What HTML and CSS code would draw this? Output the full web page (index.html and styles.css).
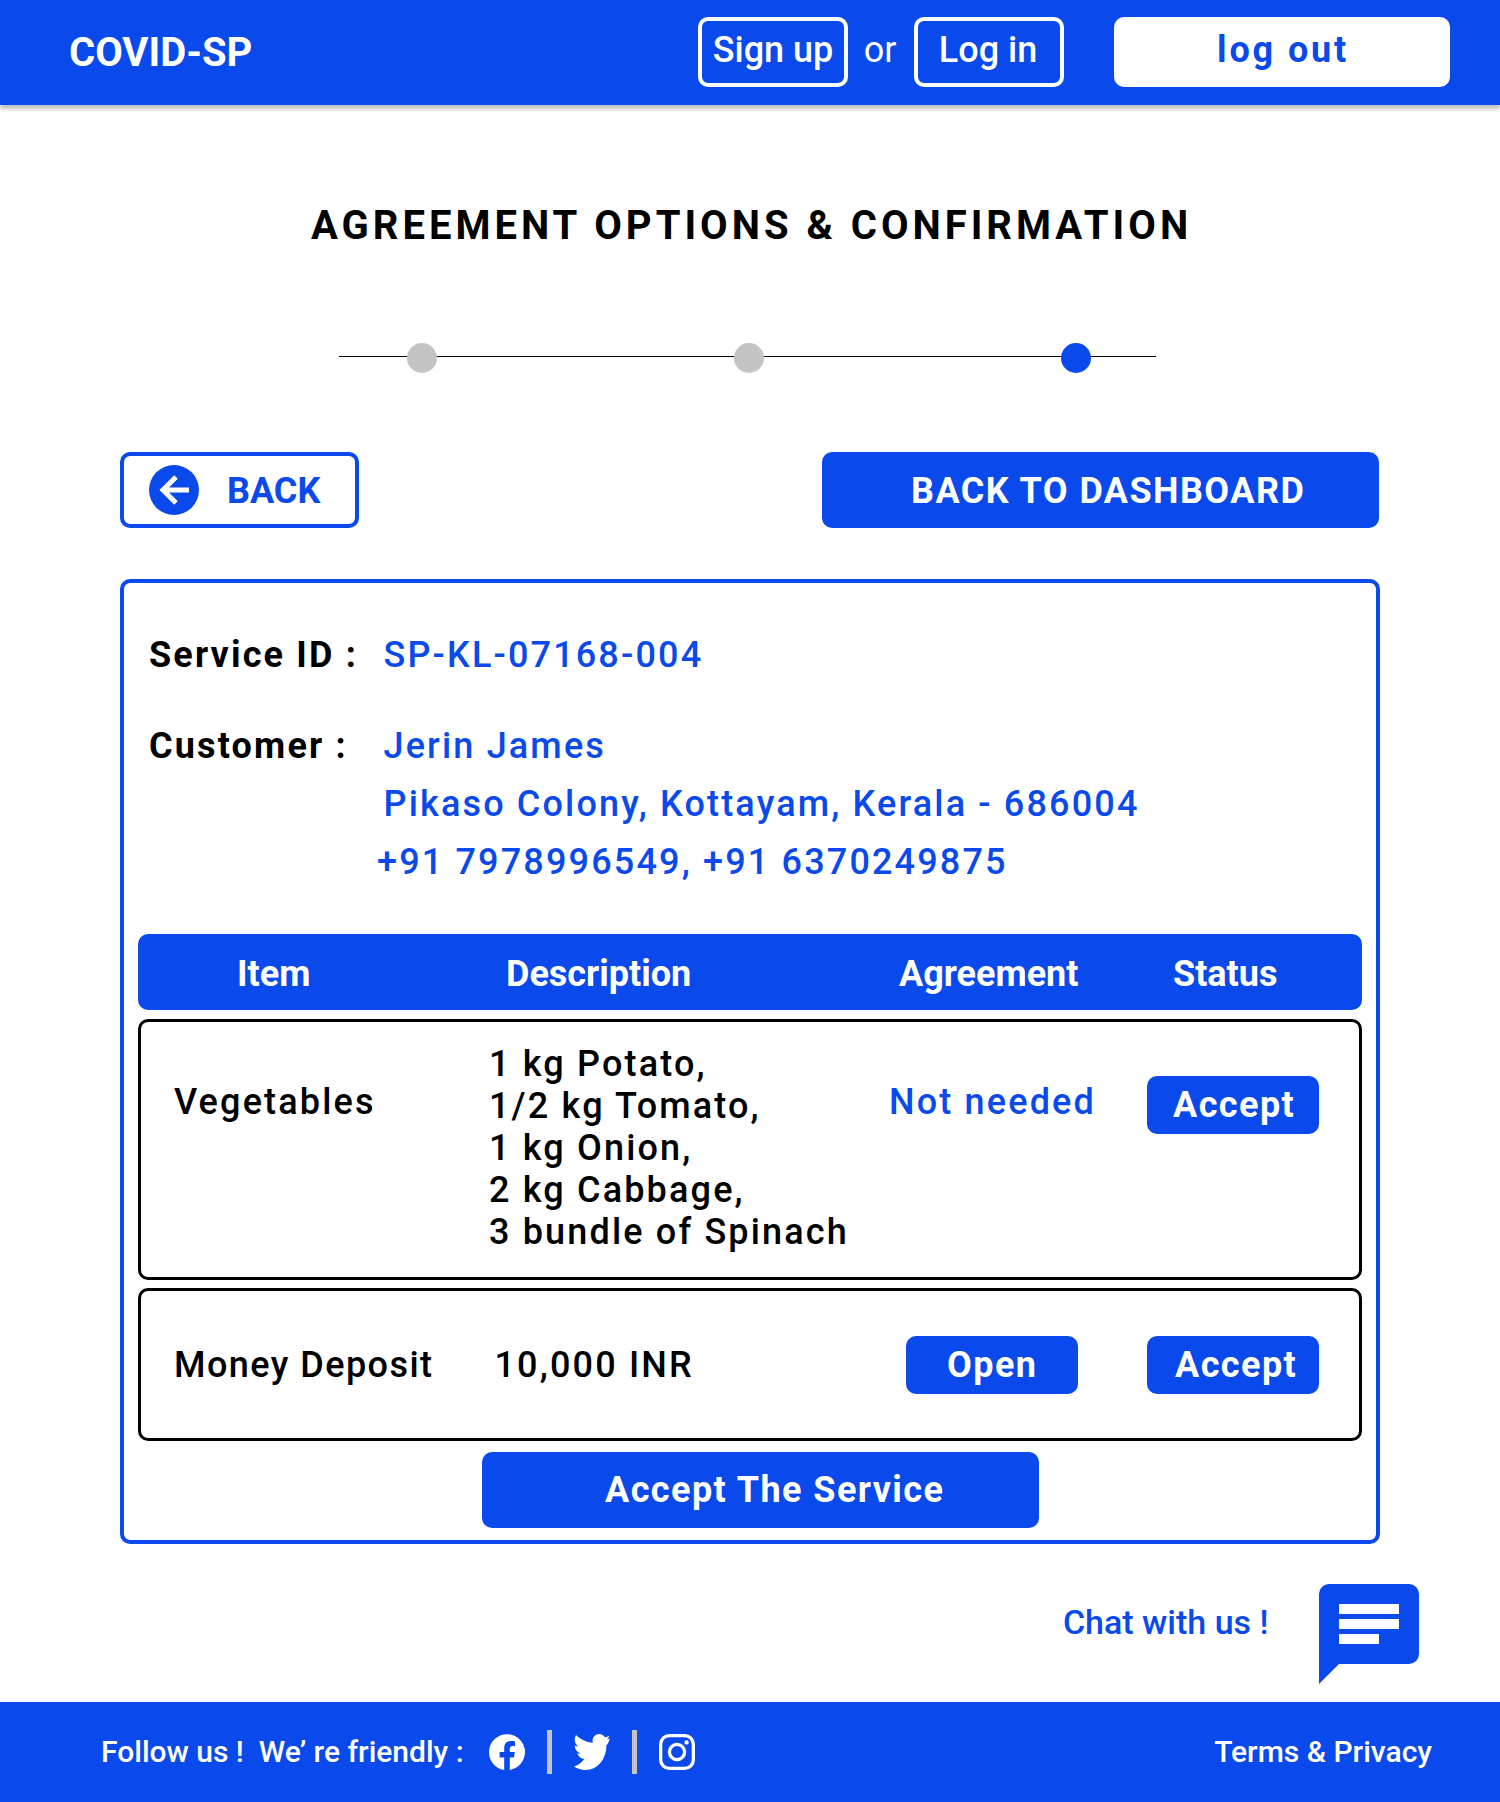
FILE: index.html
```html
<!DOCTYPE html>
<html lang="en">
<head>
<meta charset="utf-8">
<title>COVID-SP – Agreement options</title>
<link rel="stylesheet" href="styles.css">
</head>
<body>
<header class="topbar">
  <a class="logo">COVID-SP</a>
  <nav class="auth">
    <a class="auth-btn signup">Sign up</a>
    <span class="or">or</span>
    <a class="auth-btn login">Log in</a>
    <a class="logout">log out</a>
  </nav>
</header>

<main>
  <h1 class="title">AGREEMENT OPTIONS &amp; CONFIRMATION</h1>

  <div class="steps">
    <span class="dot"></span>
    <span class="dot"></span>
    <span class="dot current"></span>
  </div>

  <div class="actions">
    <a class="back">
      <svg class="back-icon" viewBox="0 0 50 50"><circle cx="25" cy="25" r="25" fill="#0a49eb"/><path d="M40 25H14M27 12L14 25l13 13" fill="none" stroke="#fff" stroke-width="5"/></svg>
      <span class="back-label">BACK</span>
    </a>
    <a class="btn wide dashboard">BACK TO DASHBOARD</a>
  </div>

  <section class="card">
    <dl class="details">
      <dt class="dt-id">Service ID :</dt>
      <dd>SP-KL-07168-004</dd>
      <dt class="dt-cust">Customer :</dt>
      <dd>
        <div class="name">Jerin James</div>
        <div class="addr">Pikaso Colony, Kottayam, Kerala - 686004</div>
        <div class="phone">+91 7978996549, +91 6370249875</div>
      </dd>
    </dl>

    <div class="grid thead">
      <div class="h-item">Item</div>
      <div class="h-desc">Description</div>
      <div class="h-agr">Agreement</div>
      <div class="h-stat">Status</div>
    </div>

    <div class="grid row row-veg">
      <div class="c-item item-veg">Vegetables</div>
      <div class="c-desc">1 kg Potato,<br>1/2 kg Tomato,<br>1 kg Onion,<br>2 kg Cabbage,<br>3 bundle of Spinach</div>
      <div class="c-none">Not needed</div>
      <div class="c-stat"><a class="btn small acc1">Accept</a></div>
    </div>

    <div class="grid row row-money">
      <div class="c-item item-money">Money Deposit</div>
      <div class="c-amount">10,000 INR</div>
      <div class="c-open"><a class="btn small open">Open</a></div>
      <div class="c-stat"><a class="btn small acc2">Accept</a></div>
    </div>

    <a class="btn wide accept-all">Accept The Service</a>
  </section>

  <div class="chat">
    <span>Chat with us !</span>
    <svg class="chat-icon" viewBox="0 0 100 100"><path fill="#0a49eb" d="M10 0H90A10 10 0 0 1 100 10V70A10 10 0 0 1 90 80H20L0 100V10A10 10 0 0 1 10 0Z"/><path fill="#fff" d="M20 20h60v10H20zM20 35h60v10H20zM20 50h40v10H20z"/></svg>
  </div>
</main>

<footer class="footer">
  <span class="follow">Follow us !&nbsp; We’ re friendly :</span>
  <svg class="social" viewBox="0 0 36 36"><path fill="#fff" d="M36 18.1A18 18 0 1 0 15.2 36V23.4h-4.6v-5.3h4.6v-4c0-4.6 2.700-7.100 6.800-7.100 2 0 4 .4 4 .4v4.500h-2.200c-2.300 0-3 1.400-3 2.900v3.300h5l-.8 5.300h-4.200V36A18 18 0 0 0 36 18.100z"/></svg>
  <i class="bar"></i>
  <svg class="social" viewBox="0 0 36 36"><path fill="#fff" d="M36 4.300c-.9.600-1.700.8-3 .9 1-.9 2-2.200 2.100-3.500-1.200.8-2.300 1.200-3.900 1.700C29.700 1.300 27.600 0 25.200 0c-4.300 0-7.500 4.200-6.400 8.700C13.500 8.500 6.900 5.500 2 .9-.2 4.500.3 9.600 4.300 12.400c-1.200 0-2.600-.4-3.500-.9 0 3.800 2.600 7 6.100 7.800-1 .3-2.200.4-3.500.1 1 3 3.700 5.300 7.100 5.400C7.900 28 4.300 31.400 0 32.500 3.300 34.700 7.200 36 11.500 36c13.500 0 21.200-13 20.800-24.600C33.800 10.400 35 7 36 4.300z"/></svg>
  <i class="bar"></i>
  <svg class="social" viewBox="0 0 36 36"><g fill="none" stroke="#fff"><rect x="1.650" y="1.650" width="32.700" height="32.700" rx="8.600" stroke-width="3.300"/><circle cx="18" cy="18" r="7.600" stroke-width="3.300"/></g><circle cx="27.600" cy="8.400" r="2.200" fill="#fff"/></svg>
  <a class="terms">Terms &amp; Privacy</a>
</footer>
</body>
</html>
```
FILE: styles.css
```css
* { box-sizing: border-box; }

body {
  margin: 0;
  width: 1500px;
  font-family: Roboto, "Liberation Sans", sans-serif;
  font-size: 36px;
  line-height: 42px;
  font-weight: 500;
  color: #000;
  background: #fff;
  white-space: nowrap;
}

.topbar {
  display: flex;
  justify-content: space-between;
  height: 105px;
  padding: 17px 50px 0 69px;
  background: #0a49eb;
  color: #fff;
  box-shadow: 0 4px 4px rgba(0, 0, 0, .25);
}
.logo { padding-top: 12px; font-size: 40px; line-height: 47px; font-weight: 700; }
.auth { display: flex; }
.auth-btn {
  width: 150px;
  height: 70px;
  padding-top: 8px;
  border: 4px solid #fff;
  border-radius: 10px;
  text-align: center;
}
.login { padding-right: 2px; }
.or { width: 66px; padding: 12px 2px 0 0; text-align: center; font-weight: 400; }
.logout {
  width: 336px;
  height: 70px;
  margin-left: 50px;
  padding: 12px 0 0 103px;
  border-radius: 10px;
  background: #fff;
  color: #0a49eb;
  font-weight: 700;
  letter-spacing: .08em;
}

.title {
  margin: 97px 0 0 311px;
  font-size: 40px;
  line-height: 47px;
  font-weight: 700;
  letter-spacing: .1em;
}

.steps {
  display: flex;
  justify-content: space-between;
  width: 817px;
  height: 30px;
  margin: 94px 0 0 339px;
  padding: 0 65px 0 68px;
  background: linear-gradient(#000, #000) 0 13px / 100% 1px no-repeat;
}
.dot { width: 30px; height: 30px; border-radius: 50%; background: #c4c4c4; }
.dot.current { background: #0a49eb; }

.actions { display: flex; justify-content: space-between; margin: 79px 121px 0 120px; }
.back {
  display: flex;
  align-items: center;
  gap: 28px;
  width: 239px;
  height: 76px;
  padding-left: 25px;
  border: 4px solid #0a49eb;
  border-radius: 10px;
  color: #0a49eb;
  font-weight: 700;
}
.back-icon { width: 50px; height: 50px; }
.back-label { padding-top: 2px; }

.btn { display: block; background: #0a49eb; color: #fff; border-radius: 10px; font-weight: 700; }
.wide { width: 557px; height: 76px; padding-top: 17px; }
.small { width: 172px; height: 58px; padding-top: 8px; letter-spacing: .04em; }
.dashboard { padding: 18px 0 0 89px; letter-spacing: .04em; }

.card {
  width: 1260px;
  height: 965px;
  margin: 51px 0 0 120px;
  padding: 51px 14px 0;
  border: 4px solid #0a49eb;
  border-radius: 10px;
}
.details {
  display: grid;
  grid-template-columns: 234.5px 1fr;
  row-gap: 49px;
  margin: 0 0 51px 11px;
  letter-spacing: .06em;
}
.details dt { font-weight: 700; }
.details dd { margin: 0; color: #0a49eb; display: flex; flex-direction: column; gap: 16px; }
.phone { margin-left: -6.5px; }

.grid { display: grid; grid-template-columns: 348px 400px 255px 1fr; }
.thead {
  height: 76px;
  padding-top: 19px;
  border-radius: 10px;
  background: #0a49eb;
  color: #fff;
  font-weight: 700;
}
.h-item { padding-left: 99px; }
.h-desc { padding-left: 20px; }
.h-agr { padding-left: 13px; }
.h-stat { padding-left: 32px; }

.row {
  margin-top: 9px;
  padding-left: 0;
  border: 3px solid #000;
  border-radius: 10px;
  letter-spacing: .06em;
  grid-template-columns: 345px 400px 255px 1fr;
}
.row-veg { height: 261px; padding-top: 21px; }
.row-money { height: 153px; margin-top: 8px; padding-top: 45px; }
.c-item { padding-left: 33px; }
.item-veg { padding-top: 38px; }
.item-money { padding-top: 8px; letter-spacing: .04em; }
.c-desc { padding-left: 3px; }
.c-amount { padding: 8px 0 0 8.5px; }
.c-none { padding: 38px 0 0 3px; color: #0a49eb; }
.c-open { padding-left: 20px; }
.c-stat { padding-left: 6px; }
.row-veg .c-stat { padding-top: 33px; }
.acc1 { padding-left: 26px; }
.acc2 { padding-left: 28px; }
.open { padding-left: 41px; }
.accept-all { margin: 11px 0 0 344px; padding-left: 123px; letter-spacing: .04em; }

.chat {
  display: flex;
  justify-content: flex-end;
  gap: 50.5px;
  height: 158px;
  padding: 40px 81px 0 0;
  color: #0a49eb;
  font-size: 34px;
  line-height: 40px;
}
.chat span { padding-top: 18px; }
.chat-icon { width: 100px; height: 100px; }

.footer {
  display: flex;
  align-items: center;
  height: 100px;
  padding: 0 68px 0 101px;
  background: #0a49eb;
  color: #fff;
  font-size: 30px;
  line-height: 35px;
}
.follow { width: 388px; padding-bottom: 2px; }
.social { width: 36px; height: 36px; }
.bar { width: 5px; height: 44px; margin: 0 22px; background: #c4c4c4; }
.terms { margin-left: auto; padding-bottom: 2px; }
```
